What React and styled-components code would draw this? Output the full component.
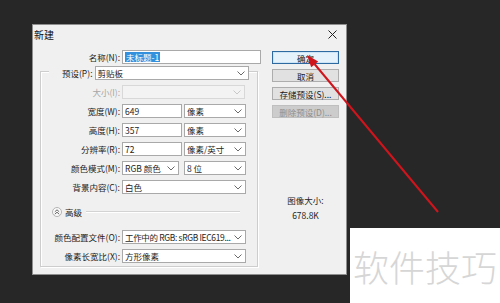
import React from "react";
import styled, { createGlobalStyle } from "styled-components";

const GlobalStyle = createGlobalStyle`
  html, body {
    margin: 0;
    padding: 0;
    background: #272727;
  }
  body {
    font-family: "Noto Sans CJK SC", "Noto Sans", sans-serif;
  }
`;

const Page = styled.div`
  position: relative;
  width: 500px;
  height: 303px;
  overflow: hidden;
  display: grid;
  grid-template-columns: 32px 315px 3px 150px;
  grid-template-rows: 24px 204px 47px 28px;
  background: #272727;
`;

const Dialog = styled.div`
  grid-column: 2;
  grid-row: 2 / 4;
  box-sizing: border-box;
  background: #f0f0f0;
  border: 1px solid #8e8e8e;
  display: flex;
  flex-direction: column;
  font-size: 8.5px;
  color: #222;
`;

const TitleBar = styled.div`
  height: 19px;
  display: flex;
  align-items: center;
  justify-content: space-between;
  padding: 0 9px 0 1px;
  font-size: 10px;
  color: #111;
`;

const Body = styled.div`
  display: flex;
  gap: 11px;
  padding: 6px 7px 0 7px;
`;

const FormColumn = styled.div`
  width: 221px;
  display: flex;
  flex-direction: column;
`;

const Row = styled.div`
  display: grid;
  grid-template-columns: ${(p) => p.$label}px auto;
  column-gap: 2px;
  align-items: center;
  height: 14px;
`;

const Label = styled.span`
  text-align: right;
  white-space: nowrap;
  color: ${(p) => (p.$disabled ? "#a6a6a6" : "#222")};
`;

const Fields = styled.div`
  display: flex;
  gap: ${(p) => p.$gap || 2}px;
`;

const Field = styled.div`
  box-sizing: border-box;
  width: ${(p) => (p.$w ? p.$w + "px" : "auto")};
  flex: ${(p) => (p.$w ? "none" : "1")};
  height: 14px;
  display: flex;
  align-items: center;
  justify-content: space-between;
  gap: 3px;
  padding: 0 3px 0 2px;
  border: 1px solid ${(p) => (p.$disabled ? "#d8d8d8" : "#a9a9a9")};
  background: ${(p) => (p.$disabled ? "#f3f3f3" : "#fff")};
  color: #1e1e1e;
  white-space: nowrap;
  overflow: hidden;
`;

const FieldText = styled.span`
  white-space: nowrap;
  letter-spacing: ${(p) => (p.$tight ? "-0.35px" : "0")};
`;

const Selected = styled.span`
  background: #3390dc;
  color: #fff;
  padding: 0 1px;
  line-height: 10px;
`;

const GroupBox = styled.div`
  margin-top: 7px;
  width: 218px;
  box-sizing: border-box;
  border: 1px solid #cdcdcd;
  box-shadow: 1px 1px 0 #fff, inset 1px 1px 0 #fff;
  padding: 0 0 3px;
  display: flex;
  flex-direction: column;
  gap: 5px;
`;

const PresetRow = styled.div`
  display: flex;
  align-items: center;
  gap: 2px;
  height: 14px;
  margin: -6px 8px 0 8px;
  padding-left: 13px;
  background: #f0f0f0;
`;

const AdvancedRow = styled.div`
  display: flex;
  align-items: center;
  height: 14px;
  margin: 6px 17px 6px 0;
  padding-left: 11px;
`;

const Toggle = styled.span`
  box-sizing: border-box;
  width: 10px;
  height: 10px;
  border-radius: 50%;
  border: 1px solid #b4b4b4;
  background: #fafafa;
  display: flex;
  align-items: center;
  justify-content: center;
`;

const AdvancedLabel = styled.span`
  margin-left: 3px;
  color: #222;
`;

const Divider = styled.span`
  flex: 1;
  margin-left: 4px;
  height: 1px;
  background: #d3d3d3;
  border-bottom: 1px solid #fff;
`;

const ButtonColumn = styled.div`
  width: 67px;
  padding-top: 1px;
  display: flex;
  flex-direction: column;
  gap: 5px;
`;

const Button = styled.div`
  box-sizing: border-box;
  height: 13px;
  display: flex;
  align-items: center;
  justify-content: center;
  white-space: nowrap;
  background: ${(p) => (p.$disabled ? "#cccccc" : p.$primary ? "#e5f1fb" : "#e1e1e1")};
  border: 1px solid ${(p) => (p.$disabled ? "#bfbfbf" : p.$primary ? "#2e6aa0" : "#adadad")};
  box-shadow: ${(p) => (p.$primary ? "inset 0 0 0 1px #cde4f7" : "none")};
  color: ${(p) => (p.$disabled ? "#8f8f8f" : "#1a1a1a")};
`;

const SizeInfo = styled.div`
  margin-top: 72px;
  display: flex;
  flex-direction: column;
  align-items: center;
  gap: 5px;
  line-height: 10px;
  color: #222;
`;

const WhiteBox = styled.div`
  grid-column: 4;
  grid-row: 3 / 5;
  background: #fff;
  padding: 20px 0 0 3px;
`;

const Watermark = styled.div`
  font-size: 36px;
  line-height: 36px;
  font-weight: 300;
  color: #d6d6d6;
  white-space: nowrap;
`;

const Overlay = styled.svg`
  position: absolute;
  left: 0;
  top: 0;
  pointer-events: none;
`;

const Chevron = ({ disabled }) => (
  <svg width="8" height="5" viewBox="0 0 8 5" style={{ flex: "none" }}>
    <polyline
      points="0.5,0.5 4,4 7.5,0.5"
      fill="none"
      stroke={disabled ? "#c8c8c8" : "#6a6a6a"}
      strokeWidth="1"
    />
  </svg>
);

const Select = ({ w, disabled, tight, children }) => (
  <Field $w={w} $disabled={disabled}>
    <FieldText $tight={tight}>{children}</FieldText>
    <Chevron disabled={disabled} />
  </Field>
);

const LABEL = 79;

export default function App() {
  return (
    <>
      <GlobalStyle />
      <Page>
        <Dialog>
          <TitleBar>
            <span>新建</span>
            <svg width="9" height="9" viewBox="0 0 9 9">
              <path d="M0.5 0.5 L8.5 8.5 M8.5 0.5 L0.5 8.5" stroke="#222" strokeWidth="1" />
            </svg>
          </TitleBar>
          <Body>
            <FormColumn>
              <Row $label={80}>
                <Label>名称(N):</Label>
                <Field $w={139}>
                  <Selected>未标题-1</Selected>
                </Field>
              </Row>
              <GroupBox>
                <PresetRow>
                  <Label>预设(P):</Label>
                  <Select>剪贴板</Select>
                </PresetRow>
                <Row $label={LABEL}>
                  <Label $disabled>大小(I):</Label>
                  <Select w={123} disabled />
                </Row>
                <Row $label={LABEL}>
                  <Label>宽度(W):</Label>
                  <Fields>
                    <Field $w={60}>649</Field>
                    <Select w={62}>像素</Select>
                  </Fields>
                </Row>
                <Row $label={LABEL}>
                  <Label>高度(H):</Label>
                  <Fields>
                    <Field $w={60}>357</Field>
                    <Select w={62}>像素</Select>
                  </Fields>
                </Row>
                <Row $label={LABEL}>
                  <Label>分辨率(R):</Label>
                  <Fields>
                    <Field $w={60}>72</Field>
                    <Select w={62}>像素/英寸</Select>
                  </Fields>
                </Row>
                <Row $label={LABEL}>
                  <Label>颜色模式(M):</Label>
                  <Fields $gap={5}>
                    <Select w={57}>RGB 颜色</Select>
                    <Select w={62}>8 位</Select>
                  </Fields>
                </Row>
                <Row $label={LABEL}>
                  <Label>背景内容(C):</Label>
                  <Select w={124}>白色</Select>
                </Row>
                <AdvancedRow>
                  <Toggle>
                    <svg width="6" height="6" viewBox="0 0 6 6">
                      <path d="M0.8 2.8 L3 0.8 L5.2 2.8 M0.8 5.2 L3 3.2 L5.2 5.2" fill="none" stroke="#555" strokeWidth="0.9" />
                    </svg>
                  </Toggle>
                  <AdvancedLabel>高级</AdvancedLabel>
                  <Divider />
                </AdvancedRow>
                <Row $label={LABEL}>
                  <Label>颜色配置文件(O):</Label>
                  <Select w={124} tight>工作中的 RGB: sRGB IEC619...</Select>
                </Row>
                <Row $label={LABEL}>
                  <Label>像素长宽比(X):</Label>
                  <Select w={124}>方形像素</Select>
                </Row>
              </GroupBox>
            </FormColumn>
            <ButtonColumn>
              <Button $primary>确定</Button>
              <Button>取消</Button>
              <Button>存储预设(S)...</Button>
              <Button $disabled>删除预设(D)...</Button>
              <SizeInfo>
                <span>图像大小:</span>
                <span>678.8K</span>
              </SizeInfo>
            </ButtonColumn>
          </Body>
        </Dialog>
        <WhiteBox>
          <Watermark>软件技巧</Watermark>
        </WhiteBox>
        <Overlay width="500" height="303" viewBox="0 0 500 303">
          <line x1="438" y1="212" x2="314.5" y2="64" stroke="#d0141c" strokeWidth="2" />
          <polygon points="307,55 318.2,61.4 311.2,67.2" fill="#d0141c" />
        </Overlay>
      </Page>
    </>
  );
}
